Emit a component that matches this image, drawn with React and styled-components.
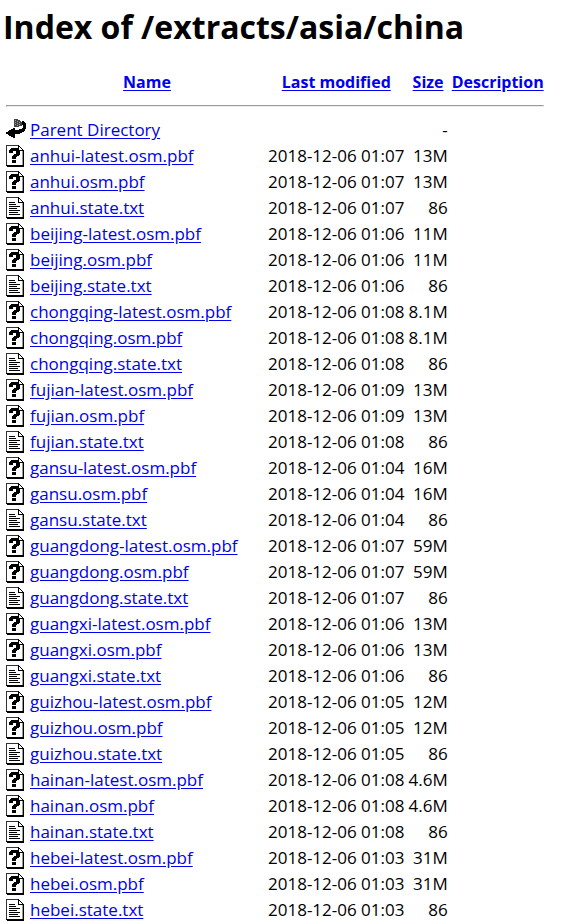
import styled, { createGlobalStyle } from 'styled-components';

const GlobalStyle = createGlobalStyle`
	body {
		margin: 0 3px;
		background: #fff;
		color: #000;
		font-family: 'Open Sans', 'Noto Sans', sans-serif;
		font-size: 17px;
		line-height: 22px;
	}
`;

const Title = styled.h1`
	margin: 0;
	padding: 3px 0 17px;
	font-size: 32px;
	line-height: 48px;
	white-space: nowrap;
`;

const Listing = styled.table`
	border-spacing: 2px;
`;

const Cell = styled.td`
	padding: 1px;
	text-align: ${({ $align }) => $align || 'left'};
	white-space: nowrap;
`;

const HeadCell = styled.th`
	padding: 1px;
	width: ${({ $width }) => $width}px;
	font-size: 16px;
	white-space: nowrap;
`;

const Rule = styled.hr`
	margin: 8px 0;
`;

const FileLink = styled.a`
	color: #0000ee;
	text-underline-offset: 2px;
`;

const IconBox = styled.svg`
	display: block;
	width: 20px;
	height: 22px;
`;

const Page = () => (
	<>
		<path fill="#fff" d="M0 0h13l5 5v16h-18z" />
		<path fill="#333" d="M0 0h13v1h-13zM0 0h1v21h-1z" />
		<path fill="#000" d="M0 20h18v1h-18zM1 21h17v1h-17zM17 5h1v17h-1zM12 0h1v6h-1zM12 5h6v1h-6zM13 1h1v1h-1zM14 2h1v1h-1zM15 3h1v1h-1zM16 4h1v1h-1z" />
		<path fill="#999" d="M16 6h1v14h-1z" />
	</>
);

const icons = {
	back: (
		<>
			<path fill="#444" d="M8 0h4v1h2v1h1v1h1v4h-3v1h-5z" />
			<path fill="#999" d="M9 1h1v1h-1zM11 2h1v1h-1zM9 3h1v1h-1zM13 3h1v1h-1zM11 4h1v1h-1zM9 5h1v1h-1zM13 5h1v1h-1zM11 6h1v1h-1z" />
			<path fill="#000" d="M16 2h2v1h1v1h1v6h-1v2h-1v1h-2v1h-2v1h-5v4h-2v-1h-2v-1h-2v-1h-1v-1h-2v-2h2v-1h1v-1h2v-1h2v-1h2v2h4v-1h3v-1h1z" />
		</>
	),
	unknown: (
		<>
			<Page />
			<path fill="#000" d="M5 3h7v1h1v1h1v5h-1v1h-2v1h-1v2h-4v-3h1v-1h1v-1h2v-3h-3v2h-4v-3h1v-1h1zM6 15h4v3h-4z" />
		</>
	),
	text: (
		<>
			<Page />
			<path fill="#000" d="M3 5h6v1h-6zM3 7h7v1h-7zM3 9h11v1h-11zM3 11h8v1h-8zM3 13h11v1h-11zM3 15h9v1h-9zM3 17h11v1h-11z" />
		</>
	),
};

const Icon = ({ id }) => (
	<IconBox viewBox="0 0 20 22" shapeRendering="crispEdges" aria-hidden="true">
		{icons[id]}
	</IconBox>
);

const regions = [
	['anhui', '13M', '07', '07'],
	['beijing', '11M', '06', '06'],
	['chongqing', '8.1M', '08', '08'],
	['fujian', '13M', '09', '08'],
	['gansu', '16M', '04', '04'],
	['guangdong', '59M', '07', '07'],
	['guangxi', '13M', '06', '06'],
	['guizhou', '12M', '05', '05'],
	['hainan', '4.6M', '08', '08'],
	['hebei', '31M', '03', '03'],
];

const files = regions.flatMap(([name, size, minute, stateMinute]) => [
	{ name: `${name}-latest.osm.pbf`, icon: 'unknown', size, minute },
	{ name: `${name}.osm.pbf`, icon: 'unknown', size, minute },
	{ name: `${name}.state.txt`, icon: 'text', size: '86', minute: stateMinute },
]);

const columns = [
	{ title: 'Name', width: 234 },
	{ title: 'Last modified', width: 135 },
	{ title: 'Size', width: 38 },
	{ title: 'Description', width: 92 },
];

const FileRow = ({ icon, name, href, modified, size }) => (
	<tr>
		<Cell>
			<Icon id={icon} />
		</Cell>
		<Cell>
			<FileLink href={href}>{name}</FileLink>
		</Cell>
		<Cell $align="right">{modified}</Cell>
		<Cell $align="right">{size}</Cell>
		<Cell />
	</tr>
);

const App = () => (
	<>
		<GlobalStyle />
		<Title>Index of /extracts/asia/china</Title>
		<Listing>
			<thead>
				<tr>
					<HeadCell $width={20} />
					{columns.map(({ title, width }) => (
						<HeadCell key={title} $width={width} scope="col">
							<FileLink href="#sort">{title}</FileLink>
						</HeadCell>
					))}
				</tr>
			</thead>
			<tbody>
				<tr>
					<Cell colSpan={5}>
						<Rule />
					</Cell>
				</tr>
				<FileRow icon="back" name="Parent Directory" href="#parent" size="-" />
				{files.map(({ name, icon, size, minute }) => (
					<FileRow
						key={name}
						icon={icon}
						name={name}
						href={`#${name}`}
						modified={`2018-12-06 01:${minute}`}
						size={size}
					/>
				))}
			</tbody>
		</Listing>
	</>
);

export default App;
